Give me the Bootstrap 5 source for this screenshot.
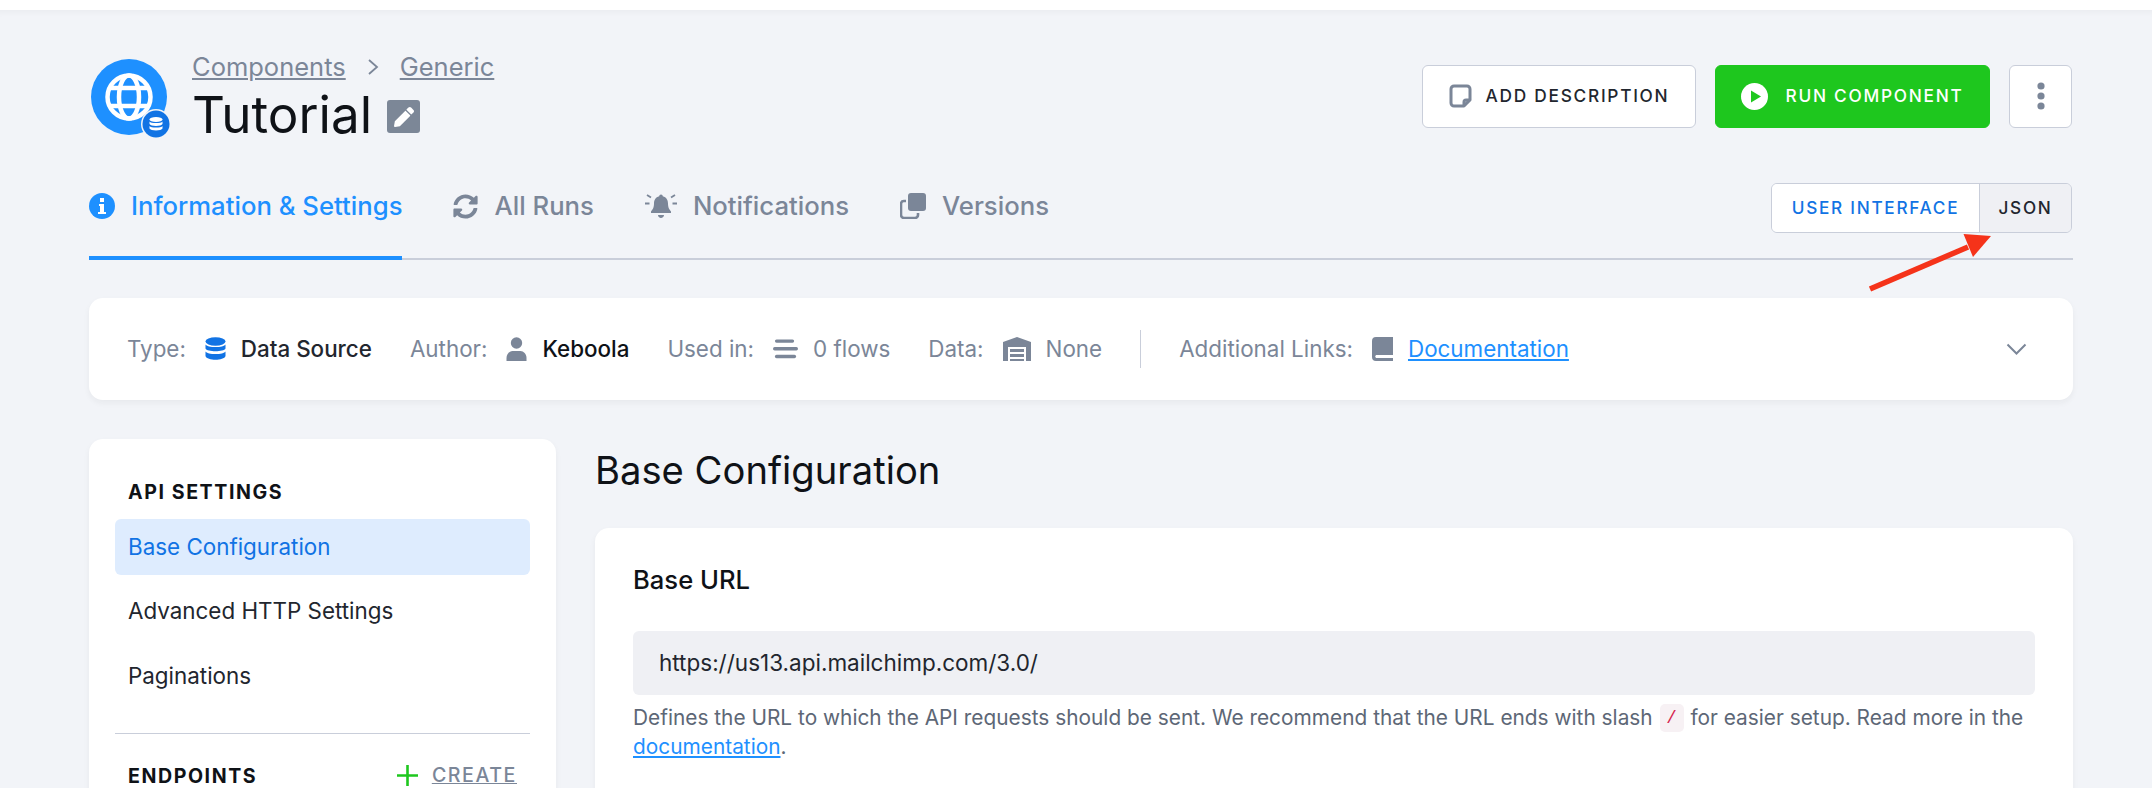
<!DOCTYPE html>
<html lang="en"><head><meta charset="utf-8"><title>Tutorial</title>
<link href="https://cdn.jsdelivr.net/npm/bootstrap@5.3.0/dist/css/bootstrap.min.css" rel="stylesheet">
<style>
html,body{height:788px;overflow:hidden}
body{background:#fff;font-family:Inter,"Noto Sans",sans-serif;font-size:19.6px;color:#0f1217}
.app-shell{background:#f2f4f8;margin-top:10px;padding:47px 79px 0 89px;height:778px;overflow:hidden;position:relative;box-shadow:inset 0 8px 8px -8px rgba(0,0,0,.06)}
.comp-logo{width:80px;height:80px;position:relative;flex:none;margin:2px 0 0 2px}
.comp-logo .sub{position:absolute;right:0;bottom:0;width:30px;height:30px}
.head-left{gap:21px}
.crumbs{font-size:25.5px;line-height:30px;color:#7b8698;margin-top:-5px}
.crumbs a{color:inherit}
.crumb-sep{margin:0 21px}
.page-title{font-size:51.2px;line-height:56px;font-weight:400;margin:4px 0 0}
.edit-tag{width:33px;height:33px;background:#7c8797;border-radius:3px;margin-left:15px;margin-top:9px}
.act-row{gap:19px;margin:8px 1px 0 0}
.act-btn{width:274px;height:63px;font-size:17.3px;font-weight:500;letter-spacing:.1em;border-radius:6px;border:1px solid #c9ceda;background:#fff;color:#22262e;display:flex;align-items:center;justify-content:center;gap:14px;text-transform:uppercase;padding:0 0 1px}
.act-run{width:275px;background:#1ec71e;border-color:#1ec71e;color:#fff;gap:17px}
.act-more{width:63px}
.tab-row{height:91px;border-bottom:2px solid #c9ceda;margin-top:27px}
.tab-item{display:flex;align-items:center;gap:16px;color:#7b8698;font-size:25.7px;font-weight:500;height:91px;padding-bottom:17px;margin-right:51px;text-decoration:none}
.tab-item.on{color:#1e90ff;border-bottom:4px solid #1e90ff;padding-bottom:13px;margin-bottom:-2px}
.view-toggle{margin:14px 1px 0 0;height:50px;border:1px solid #c9ceda;border-radius:6px;font-size:17.2px;font-weight:500;letter-spacing:.1em;overflow:hidden;width:301px;display:flex}
.view-toggle span{display:flex;align-items:center;justify-content:center}
.view-ui{width:208px;background:#fff;color:#1173e4;border-right:1px solid #c9ceda}
.view-json{flex:1;background:#eff0f4;color:#22262e}
.meta-strip{background:#fff;border-radius:14px;height:102px;margin-top:38px;padding:0 46px 0 38px;box-shadow:0 3px 6px rgba(34,37,41,.05);font-size:22.4px}
.meta-lbl{color:#7b8698}
.meta-val{color:#22262e}
.meta-gap{margin-left:38px}
.meta-ico{margin:0 15px 0 19px}
.meta-sep{width:1px;height:38px;background:#c9ceda;margin:0 38px}
.meta-link{color:#1e90ff}
.work-area{margin-top:39px;gap:39px}
.side-nav{width:467px;flex:none;background:#fff;border-radius:14px;padding:37.5px 26px 0;height:500px;box-shadow:0 3px 6px rgba(34,37,41,.05)}
.side-head{font-size:19.6px;font-weight:700;letter-spacing:.08em;padding-left:13px;line-height:30px}
.side-gap{margin-bottom:12px}
.side-link{display:block;font-size:22.4px;line-height:56px;height:56px;padding-left:13px;border-radius:6px;margin-bottom:8.5px;color:#22262e}
.side-link.on{background:#deecfe;color:#1173e4}
.side-rule{height:1px;background:#c9ceda;margin:29.5px 0 27px}
.side-create{color:#7b8698;font-weight:500;letter-spacing:.08em;font-size:19.6px;display:flex;align-items:center;gap:14px;padding-right:13px}
.main-col{flex:1;min-width:0}
.sect-title{font-size:38.2px;line-height:46px;font-weight:400;margin:0;padding-top:8px}
.form-panel{background:#fff;border-radius:14px;margin-top:35px;padding:35.5px 38px 34px 38px;height:400px;box-shadow:0 3px 6px rgba(34,37,41,.05)}
.form-lbl{font-size:25.6px;font-weight:500;line-height:32px}
.url-box{margin-top:35.5px;height:64px;background:#eff0f4;border-radius:6px;font-size:22.5px;padding-left:26px;display:flex;align-items:center;color:#22262e}
.help-txt{font-size:20.85px;line-height:28.8px;color:#5d6776;margin-top:9px}
.help-txt a{color:#1e90ff}
.help-txt code{display:inline-block;width:24px;text-align:center;line-height:28px;background:#f7f1f4;color:#d6254f;border-radius:5px;font-size:17.5px;margin:0 1px;vertical-align:top}
.red-arrow{position:absolute;left:1860px;top:216px;width:140px;height:75px}
svg{display:block;flex:none}
</style></head><body>
<div class="app-shell">
 <div class="d-flex align-items-start justify-content-between">
  <div class="d-flex head-left">
   <div class="comp-logo">
    <svg width="76" height="76" viewBox="0 0 76 76"><circle cx="38" cy="38" r="38" fill="#1e90ff"/><g fill="none" stroke="#fff" stroke-width="4.5"><circle cx="38" cy="38" r="21.5"/><ellipse cx="38" cy="38" rx="10" ry="21.5"/><path d="M18 29H58M18 47H58"/></g></svg>
    <svg class="sub" viewBox="0 0 30 30"><circle cx="15" cy="15" r="15" fill="#f2f4f8"/><circle cx="15" cy="15" r="13.5" fill="#1173e4"/><g fill="#fff"><ellipse cx="15" cy="10.5" rx="6.5" ry="2.6"/><path d="M8.5 12.5c1 2 12 2 13 0v2.5c-1 2.6-12 2.6-13 0zM8.5 17c1 2 12 2 13 0v2.5c-1 2.6-12 2.6-13 0z"/></g></svg>
   </div>
   <div>
    <div class="crumbs d-flex align-items-center"><a href="#">Components</a><svg class="crumb-sep" width="12" height="18" viewBox="0 0 12 18" fill="none" stroke="#7b8698" stroke-width="1.8"><path d="M2 2l8 7-8 7"/></svg><a href="#">Generic</a></div>
    <div class="d-flex align-items-center"><h1 class="page-title">Tutorial</h1>
     <div class="edit-tag d-flex align-items-center justify-content-center"><svg width="20" height="20" viewBox="0 0 512 512" fill="#fff"><path d="M497.9 142.1l-46.1 46.1c-4.7 4.7-12.3 4.7-17 0l-111-111c-4.7-4.7-4.7-12.3 0-17l46.1-46.1c18.7-18.7 49.1-18.7 67.9 0l60.1 60.1c18.8 18.7 18.8 49.1 0 67.9zM284.2 99.8L21.6 362.4.4 483.9c-2.9 16.4 11.4 30.6 27.8 27.8l121.5-21.3 262.6-262.6c4.7-4.7 4.7-12.3 0-17l-111-111c-4.8-4.7-12.4-4.7-17.1 0z"/></svg></div>
    </div>
   </div>
  </div>
  <div class="d-flex act-row">
   <button class="act-btn"><svg width="23" height="24" viewBox="0 0 23 24" fill="none" stroke="#7b8698" stroke-width="3"><path d="M15 22H5a3 3 0 0 1-3-3V5a3 3 0 0 1 3-3h13a3 3 0 0 1 3 3v11zM15 22v-4a2 2 0 0 1 2-2h4" stroke-linejoin="round"/></svg>Add description</button>
   <button class="act-btn act-run"><svg width="27" height="27" viewBox="0 0 27 27"><circle cx="13.5" cy="13.5" r="13.5" fill="#fff"/><path d="M10 7.5l10 6-10 6z" fill="#1ec71e"/></svg>Run component</button>
   <button class="act-btn act-more" aria-label="More"><svg width="8" height="28" viewBox="0 0 8 28" fill="#7b8698"><circle cx="4" cy="4" r="3.6"/><circle cx="4" cy="14" r="3.6"/><circle cx="4" cy="24" r="3.6"/></svg></button>
  </div>
 </div>
 <div class="tab-row d-flex justify-content-between">
  <div class="d-flex">
   <a class="tab-item on" href="#"><svg width="26" height="26" viewBox="0 0 26 26"><circle cx="13" cy="13" r="13" fill="#1e90ff"/><path d="M10 11h5v8h2v2H9v-2h2v-6h-1zM11 5h4v4h-4z" fill="#fff"/></svg>Information &amp; Settings</a>
   <a class="tab-item" href="#"><svg width="25" height="25" viewBox="0 0 512 512" fill="#7b8698"><path d="M370.72 133.28C339.458 104.008 298.888 87.962 255.848 88c-77.458.068-144.328 53.178-162.791 126.85-1.344 5.363-6.122 9.15-11.651 9.15H24.103c-7.498 0-13.194-6.807-11.807-14.176C33.933 94.924 134.813 8 256 8c66.448 0 126.791 26.136 171.315 68.685L463.03 40.97C478.149 25.851 504 36.559 504 57.941V192c0 13.255-10.745 24-24 24H345.941c-21.382 0-32.09-25.851-16.971-40.971l41.75-41.749zM32 296h134.059c21.382 0 32.09 25.851 16.971 40.971l-41.75 41.75c31.262 29.273 71.835 45.319 114.876 45.28 77.418-.07 144.315-53.144 162.787-126.849 1.344-5.363 6.122-9.15 11.651-9.15h57.304c7.498 0 13.194 6.807 11.807 14.176C478.067 417.076 377.187 504 256 504c-66.448 0-126.791-26.136-171.315-68.685L48.97 471.03C33.851 486.149 8 475.441 8 454.059V320c0-13.255 10.745-24 24-24z"/></svg>All Runs</a>
   <a class="tab-item" href="#"><svg width="32" height="26" viewBox="0 0 32 26" fill="#7b8698"><path d="M16 1.500a1.800 1.800 0 0 1 1.800 1.800c3.600.8 5.200 3.800 5.200 7.200 0 4.500 1.500 6 3 8v1.500H6v-1.500c1.500-2 3-3.500 3-8 0-3.400 1.600-6.400 5.200-7.200A1.800 1.800 0 0 1 16 1.500zM13 22h6c0 1.600-1.400 3-3 3s-3-1.400-3-3z"/><path d="M2 2l4 2.500M30 2l-4 2.500M0 10.500h4.500M27.500 10.500H32" stroke="#7b8698" stroke-width="1.800"/></svg>Notifications</a>
   <a class="tab-item" href="#"><svg width="26" height="26" viewBox="0 0 26 26"><rect x="8" y="0" width="18" height="18" rx="3" fill="#7b8698"/><path d="M6 8H4a3 3 0 0 0-3 2.500V22a3 3 0 0 0 3 3h11a3 3 0 0 0 3-3v-2" fill="none" stroke="#7b8698" stroke-width="2.600"/></svg>Versions</a>
  </div>
  <div class="view-toggle"><span class="view-ui">USER INTERFACE</span><span class="view-json">JSON</span></div>
 </div>
 <div class="meta-strip d-flex align-items-center">
  <span class="meta-lbl">Type:</span>
  <svg class="meta-ico" width="21" height="24" viewBox="0 0 21 24" fill="#1173e4"><ellipse cx="10.500" cy="4.500" rx="10" ry="4.200"/><path d="M.5 7.500c1.500 3.400 18.500 3.400 20 0v4c-1.500 3.600-18.500 3.600-20 0zM.5 14.500c1.500 3.400 18.500 3.400 20 0v4.500c-1.500 5-18.500 5-20 0z"/></svg>
  <span class="fw-medium meta-val">Data Source</span>
  <span class="meta-lbl meta-gap">Author:</span>
  <svg class="meta-ico" width="21" height="24" viewBox="0 0 21 24" fill="#7b8698"><circle cx="10.500" cy="6" r="5.700"/><path d="M.5 24v-3c0-4 3-7 6-7h8c3 0 6 3 6 7v3z"/></svg>
  <span class="fw-medium">Keboola</span>
  <span class="meta-lbl meta-gap">Used in:</span>
  <svg class="meta-ico" width="25" height="22" viewBox="0 0 26 22" fill="#7b8698"><rect x="2" y="1" width="20" height="3.500" rx="1.700"/><rect x="0" y="9" width="26" height="3.500" rx="1.700"/><rect x="2" y="17" width="22" height="3.500" rx="1.700"/></svg>
  <span class="meta-lbl">0 flows</span>
  <span class="meta-lbl meta-gap">Data:</span>
  <svg class="meta-ico" width="28" height="24" viewBox="0 0 28 24" fill="#7b8698"><path d="M14 0l14 5v19h-5V10H5v14H0V5z"/><path d="M7 12h14v3H7zM7 17h14v3H7zM7 22h14v2H7z"/></svg>
  <span class="meta-lbl">None</span>
  <span class="meta-sep"></span>
  <span class="meta-lbl">Additional Links:</span>
  <svg class="meta-ico" width="21" height="24" viewBox="0 0 21 24" fill="#7b8698"><path d="M4 0h17v18H4a2 2 0 0 0 0 3h17v3H4a4 4 0 0 1-4-4V4a4 4 0 0 1 4-4z"/></svg>
  <a class="meta-link" href="#">Documentation</a>
  <svg class="ms-auto" width="21" height="13" viewBox="0 0 21 13" fill="none" stroke="#7b8698" stroke-width="2"><path d="M1.500 1.500l9 9 9-9"/></svg>
 </div>
 <div class="work-area d-flex align-items-start">
  <nav class="side-nav">
   <div class="side-head side-gap">API SETTINGS</div>
   <a class="side-link on text-decoration-none" href="#">Base Configuration</a>
   <a class="side-link text-decoration-none" href="#">Advanced HTTP Settings</a>
   <a class="side-link text-decoration-none" href="#">Paginations</a>
   <div class="side-rule"></div>
   <div class="d-flex justify-content-between align-items-center">
    <div class="side-head">ENDPOINTS</div>
    <a class="side-create" href="#"><svg width="21" height="21" viewBox="0 0 21 21" stroke="#1ec71e" stroke-width="2.600"><path d="M10.500 0v21M0 10.500h21"/></svg><span class="text-decoration-underline">CREATE</span></a>
   </div>
  </nav>
  <main class="main-col">
   <h2 class="sect-title">Base Configuration</h2>
   <section class="form-panel">
    <div class="form-lbl">Base URL</div>
    <div class="url-box">https://us13.api.mailchimp.com/3.0/</div>
    <p class="help-txt">Defines the URL to which the API requests should be sent. We recommend that the URL ends with slash <code>/</code> for easier setup. Read more in the <a href="#">documentation</a>.</p>
   </section>
  </main>
 </div>
 <svg class="red-arrow" viewBox="0 0 140 75"><path d="M10 63L108 21" stroke="#f5331a" stroke-width="5.500"/><path d="M131 10L103.500 8L113 31z" fill="#f5331a"/></svg>
</div>
<script src="https://cdn.jsdelivr.net/npm/bootstrap@5.3.0/dist/js/bootstrap.bundle.min.js"></script>
</body></html>
